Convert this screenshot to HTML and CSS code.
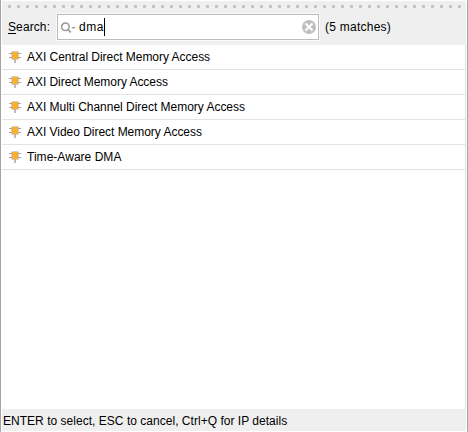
FILE: index.html
```
<!DOCTYPE html>
<html lang="en">
<head>
<meta charset="utf-8">
<title>IP search</title>
<link rel="stylesheet" href="styles.css">
</head>
<body>
<svg width="0" height="0" class="defs">
  <symbol id="ip" viewBox="0 0 12 13">
    <path d="M0 2.5H12M0 6.5H12" stroke="#a6a6a6"/>
    <path d="M6 8V12" stroke="#bdbdbd" stroke-width="2"/>
    <rect x="2.5" y="0.5" width="7" height="8" fill="#b5a58c"/>
    <rect x="3.3" y="1" width="5.4" height="7" fill="#fdb02c"/>
  </symbol>
</svg>
<main class="popup">
  <div class="grip"></div>
  <div class="search">
    <label class="label"><u>S</u>earch:</label>
    <div class="field">
      <svg class="lens" width="15" height="13" viewBox="0 0 15 13"><circle cx="4.4" cy="4.8" r="3.8" fill="none" stroke="#999" stroke-width="1.5"/><path d="M7 7.5L9.8 10.5" stroke="#999" stroke-width="1.8"/><path d="M10.5 5h4l-2 2z" fill="#999"/></svg>
      <span class="query">dma</span><span class="caret"></span>
      <svg class="clear" width="14" height="14" viewBox="0 0 14 14"><circle cx="7" cy="7" r="7" fill="#bfbfbf"/><path d="M3.5 3.5L10.5 10.5M10.5 3.5L3.5 10.5" stroke="#fff" stroke-width="2"/></svg>
    </div>
    <span class="count">(5 matches)</span>
  </div>
  <ul class="results">
    <li><svg class="chip"><use href="#ip"/></svg><span class="r1">AXI Central Direct Memory Access</span></li>
    <li><svg class="chip"><use href="#ip"/></svg><span class="r2">AXI Direct Memory Access</span></li>
    <li><svg class="chip"><use href="#ip"/></svg><span class="r3">AXI Multi Channel Direct Memory Access</span></li>
    <li><svg class="chip"><use href="#ip"/></svg><span class="r4">AXI Video Direct Memory Access</span></li>
    <li><svg class="chip"><use href="#ip"/></svg><span class="r5">Time-Aware DMA</span></li>
  </ul>
  <footer class="status"><span>ENTER to select, ESC to cancel, Ctrl+Q for IP details</span></footer>
</main>
</body>
</html>
```
FILE: styles.css
```
* { box-sizing: border-box; }
body { margin: 0; background: #fff; color: #000; font: 12px/14px "Liberation Sans", Arial, sans-serif; }
.defs { display: none; }
.popup { display: flex; flex-direction: column; width: 468px; height: 432px; padding: 1px; border: solid #a5a5a5; border-width: 0 1px; }
.grip { height: 10px; flex: none; background: #efefef; padding: 4px 4px 3px 6px; }
.grip::before { content: ""; display: block; height: 3px; width: 453px; background: repeating-linear-gradient(90deg, #c4c4c4 0 3px, transparent 3px 9px); }
.search { display: flex; flex: none; height: 34px; background: #efefef; padding: 3px 0 0 6px; }
.label { width: 49px; padding-top: 6px; letter-spacing: .1px; }
.label u { text-underline-offset: 2px; }
.field { display: flex; width: 262px; height: 26px; border: 1px solid #bcbcbc; background: #fff; box-shadow: 0 0 0 1px #fafafa; padding: 0 2px 0 3px; }
.lens { margin-top: 7px; }
.query { margin: 5px 0 0 3px; letter-spacing: .5px; }
.caret { width: 1px; height: 18px; margin-top: 3px; background: #000; }
.clear { margin: 5px 0 0 auto; }
.count { margin: 6px 0 0 6px; letter-spacing: .25px; }
.results { flex: 1; margin: 0; padding: 0; list-style: none; border-right: 1px solid #e3e3e3; }
.results li { display: flex; height: 25px; border-bottom: 1px solid #e3e3e3; padding: 5px 0 0 7px; }
.chip { width: 12px; height: 13px; margin: 1px 6px 0 0; }
.r1, .r4 { letter-spacing: -.03px; }
.r2 { letter-spacing: -.05px; }
.r3 { letter-spacing: -.02px; }
.r5 { letter-spacing: .03px; }
.status { flex: none; height: 22px; background: #efefef; padding: 5px 0 0 1px; letter-spacing: .025px; }
```
